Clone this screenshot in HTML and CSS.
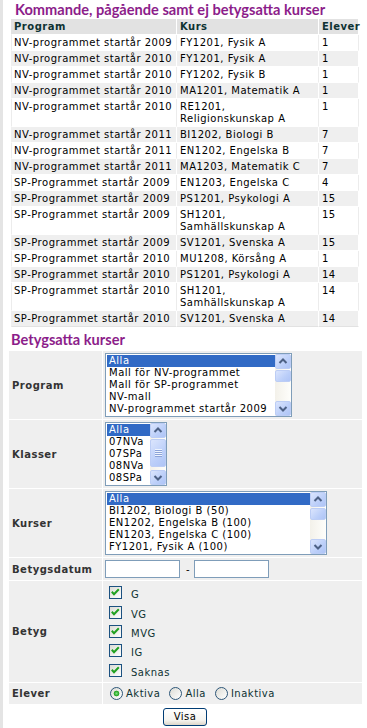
FILE: index.html
```html
<!DOCTYPE html>
<html lang="sv">
<head>
    <meta charset="UTF-8">
    <meta name="viewport" content="width=device-width, initial-scale=1.0">
    <title>Kurser</title>
    <link rel="stylesheet" href="styles.css">
</head>
<body>
<div class="page">
    <!-- Kommande kurser -->
    <h2 class="section-title">Kommande, pågående samt ej betygsatta kurser</h2>
    <table class="course-table">
        <colgroup>
            <col class="col-program">
            <col class="col-kurs">
            <col class="col-elever">
        </colgroup>
        <thead>
            <tr><th>Program</th><th>Kurs</th><th>Elever</th></tr>
        </thead>
        <tbody>
            <tr><td>NV-programmet startår 2009</td><td>FY1201, Fysik A</td><td>1</td></tr>
            <tr><td>NV-programmet startår 2010</td><td>FY1201, Fysik A</td><td>1</td></tr>
            <tr><td>NV-programmet startår 2010</td><td>FY1202, Fysik B</td><td>1</td></tr>
            <tr><td>NV-programmet startår 2010</td><td>MA1201, Matematik A</td><td>1</td></tr>
            <tr><td>NV-programmet startår 2010</td><td>RE1201, Religionskunskap A</td><td>1</td></tr>
            <tr><td>NV-programmet startår 2011</td><td>BI1202, Biologi B</td><td>7</td></tr>
            <tr><td>NV-programmet startår 2011</td><td>EN1202, Engelska B</td><td>7</td></tr>
            <tr><td>NV-programmet startår 2011</td><td>MA1203, Matematik C</td><td>7</td></tr>
            <tr><td>SP-Programmet startår 2009</td><td>EN1203, Engelska C</td><td>4</td></tr>
            <tr><td>SP-Programmet startår 2009</td><td>PS1201, Psykologi A</td><td>15</td></tr>
            <tr><td>SP-Programmet startår 2009</td><td>SH1201, Samhällskunskap A</td><td>15</td></tr>
            <tr><td>SP-Programmet startår 2009</td><td>SV1201, Svenska A</td><td>15</td></tr>
            <tr><td>SP-Programmet startår 2010</td><td>MU1208, Körsång A</td><td>1</td></tr>
            <tr><td>SP-Programmet startår 2010</td><td>PS1201, Psykologi A</td><td>14</td></tr>
            <tr><td>SP-Programmet startår 2010</td><td>SH1201, Samhällskunskap A</td><td>14</td></tr>
            <tr><td>SP-Programmet startår 2010</td><td>SV1201, Svenska A</td><td>14</td></tr>
        </tbody>
    </table>

    <!-- Betygsatta kurser -->
    <h2 class="section-title second">Betygsatta kurser</h2>
    <table class="filter-table">
        <tr>
            <th>Program</th>
            <td>
                <div class="listbox lb-program">
                    <ul>
                        <li class="selected">Alla</li>
                        <li>Mall för NV-programmet</li>
                        <li>Mall för SP-programmet</li>
                        <li>NV-mall</li>
                        <li>NV-programmet startår 2009</li>
                    </ul>
                    <div class="scrollbar">
                        <div class="sb-btn"><svg viewBox="0 0 14 13"><polyline points="3.5,8 7,4.5 10.5,8"/></svg></div>
                        <div class="sb-thumb small"></div>
                        <div class="sb-track"></div>
                        <div class="sb-btn"><svg viewBox="0 0 14 13"><polyline points="3.5,5 7,8.5 10.5,5"/></svg></div>
                    </div>
                </div>
            </td>
        </tr>
        <tr>
            <th>Klasser</th>
            <td>
                <div class="listbox lb-klasser">
                    <ul>
                        <li class="selected">Alla</li>
                        <li>07NVa</li>
                        <li>07SPa</li>
                        <li>08NVa</li>
                        <li>08SPa</li>
                    </ul>
                    <div class="scrollbar">
                        <div class="sb-btn"><svg viewBox="0 0 14 13"><polyline points="3.5,8 7,4.5 10.5,8"/></svg></div>
                        <div class="sb-thumb large"><span class="grip"></span></div>
                        <div class="sb-track"></div>
                        <div class="sb-btn"><svg viewBox="0 0 14 13"><polyline points="3.5,5 7,8.5 10.5,5"/></svg></div>
                    </div>
                </div>
            </td>
        </tr>
        <tr>
            <th>Kurser</th>
            <td>
                <div class="listbox lb-kurser">
                    <ul>
                        <li class="selected">Alla</li>
                        <li>BI1202, Biologi B (50)</li>
                        <li>EN1202, Engelska B (100)</li>
                        <li>EN1203, Engelska C (100)</li>
                        <li>FY1201, Fysik A (100)</li>
                    </ul>
                    <div class="scrollbar">
                        <div class="sb-btn"><svg viewBox="0 0 14 13"><polyline points="3.5,8 7,4.5 10.5,8"/></svg></div>
                        <div class="sb-thumb small"></div>
                        <div class="sb-track"></div>
                        <div class="sb-btn"><svg viewBox="0 0 14 13"><polyline points="3.5,5 7,8.5 10.5,5"/></svg></div>
                    </div>
                </div>
            </td>
        </tr>
        <tr>
            <th>Betygsdatum</th>
            <td>
                <div class="date-range">
                    <input type="text" class="date-input">
                    <span class="dash">-</span>
                    <input type="text" class="date-input">
                </div>
            </td>
        </tr>
        <tr>
            <th>Betyg</th>
            <td>
                <div class="check-list">
                    <label class="check"><span class="box"><svg viewBox="0 0 11 11"><polyline points="1.8,4.8 4,7.2 8.8,2.2"/></svg></span><span class="check-text">G</span></label>
                    <label class="check"><span class="box"><svg viewBox="0 0 11 11"><polyline points="1.8,4.8 4,7.2 8.8,2.2"/></svg></span><span class="check-text">VG</span></label>
                    <label class="check"><span class="box"><svg viewBox="0 0 11 11"><polyline points="1.8,4.8 4,7.2 8.8,2.2"/></svg></span><span class="check-text">MVG</span></label>
                    <label class="check"><span class="box"><svg viewBox="0 0 11 11"><polyline points="1.8,4.8 4,7.2 8.8,2.2"/></svg></span><span class="check-text">IG</span></label>
                    <label class="check"><span class="box"><svg viewBox="0 0 11 11"><polyline points="1.8,4.8 4,7.2 8.8,2.2"/></svg></span><span class="check-text">Saknas</span></label>
                </div>
            </td>
        </tr>
        <tr>
            <th>Elever</th>
            <td>
                <div class="radio-row">
                    <label class="radio checked"><span class="dot"></span>Aktiva</label>
                    <label class="radio"><span class="dot"></span>Alla</label>
                    <label class="radio"><span class="dot"></span>Inaktiva</label>
                </div>
            </td>
        </tr>
    </table>
    <div class="actions">
        <button type="button" class="btn">Visa</button>
    </div>
</div>
</body>
</html>
```

FILE: styles.css
```css
* {
    margin: 0;
    padding: 0;
    box-sizing: border-box;
}

body {
    font-family: "DejaVu Sans", Verdana, sans-serif;
    font-size: 10px;
    letter-spacing: 0.5px;
    color: #000;
    background: #fff;
    border-left: 3px solid #e4e4e4;
    min-height: 100vh;
}

.page {
    padding: 0 8px;
}

.section-title {
    font-family: Lato, "Open Sans", sans-serif;
    font-size: 14.6px;
    font-weight: bold;
    letter-spacing: 0;
    line-height: 16px;
    color: #8c1d8a;
    height: 19px;
    padding: 2px 0 0 4px;
}

.section-title.second {
    margin-top: 3px;
    height: 21px;
    padding-left: 0;
}

/* course table */
.course-table {
    width: 348px;
    table-layout: fixed;
    border-collapse: separate;
    border-spacing: 0;
}

.col-program { width: 166px; }
.col-kurs { width: 142px; }
.col-elever { width: 40px; }

.course-table th,
.course-table td {
    padding: 2px 3px 1px;
    line-height: 12px;
    text-align: left;
    vertical-align: top;
    border-right: 1px solid #ececec;
    border-bottom: 1px solid #fff;
}

.course-table td:first-child {
    white-space: nowrap;
    border-left: 1px solid #ececec;
    padding-left: 2px;
}

.course-table th:first-child {
    border-left: 1px solid #e2e2e2;
    padding-left: 2px;
}

.course-table th {
    background: #e2e2e2;
    color: #0e3232;
    font-weight: bold;
    border-right-color: #fff;
}

.course-table tbody tr:nth-child(even) td {
    background: #efefef;
    border-right-color: #fff;
    border-left-color: #efefef;
}

.course-table tbody tr:last-child td {
    border-bottom-color: #e2e2e2;
}

/* filter form */
.filter-table {
    width: 353px;
    margin: 0 -2px;
    border-collapse: separate;
    border-spacing: 0;
    background: #efefef;
}

.filter-table th {
    width: 94px;
    text-align: left;
    font-weight: bold;
    color: #333;
    padding-left: 3px;
    vertical-align: middle;
    border-right: 1px solid #fff;
    border-bottom: 1px solid #fff;
}

.filter-table td {
    padding: 2px;
    border-bottom: 1px solid #fff;
}

.filter-table tr:last-child th,
.filter-table tr:last-child td {
    border-bottom: none;
}

.listbox {
    display: flex;
    height: 64px;
    border: 1px solid #7f9db9;
    background: #fff;
}

.lb-program { width: 187px; }
.lb-klasser { width: 62px; }
.lb-kurser { width: 222px; }

.listbox ul {
    flex: 1;
    min-width: 0;
    list-style: none;
    padding: 1px 0 0 1px;
    overflow: hidden;
}

.listbox li {
    height: 12px;
    line-height: 12px;
    padding-left: 2px;
    white-space: nowrap;
}

.listbox li.selected {
    background: #316ac5;
    color: #fff;
}

.scrollbar {
    width: 16px;
    flex-shrink: 0;
    display: flex;
    flex-direction: column;
    background: linear-gradient(to right, #f3f1ea, #fefefb);
}

.sb-btn,
.sb-thumb {
    border: 1px solid #bccdf5;
    border-radius: 2px;
    background: linear-gradient(135deg, #dbe5fd, #bccff9 60%, #aec4f6);
}

.sb-btn {
    height: 15px;
    flex-shrink: 0;
}

.sb-btn svg {
    display: block;
    width: 14px;
    height: 13px;
    fill: none;
    stroke: #4d6185;
    stroke-width: 2;
}

.sb-thumb.small { height: 12px; margin-top: 1px; }
.sb-thumb.large {
    height: 28px;
    margin-top: 1px;
    display: flex;
    align-items: center;
    justify-content: center;
}

.grip {
    width: 7px;
    height: 8px;
    background: repeating-linear-gradient(to bottom, #eef4fe 0, #eef4fe 1px, #8ca3d8 1px, #8ca3d8 2px);
}

.sb-track { flex: 1; }

.date-range {
    display: flex;
    align-items: center;
}

.date-input {
    width: 75px;
    height: 18px;
    border: 1px solid #7f9db9;
    background: #fff;
    font-family: inherit;
    font-size: 10px;
}

.dash {
    margin: 0 4px 0 6px;
    color: #000;
}

.check-list {
    display: flex;
    flex-direction: column;
    padding-left: 4px;
}

.check {
    display: flex;
    align-items: center;
    height: 19.4px;
}

.box {
    width: 13px;
    height: 13px;
    border: 1px solid #1c5180;
    background: linear-gradient(135deg, #dcdcd5, #fff);
}

.box svg {
    display: block;
    width: 11px;
    height: 11px;
    fill: none;
    stroke: #21a121;
    stroke-width: 2;
}

.check-text {
    margin: 4px 0 0 9px;
    color: #0e3232;
}

.radio-row {
    display: flex;
    align-items: center;
    height: 17px;
    padding-left: 5px;
    gap: 9px;
    color: #0e3232;
}

.radio {
    display: flex;
    align-items: center;
    gap: 3px;
}

.dot {
    width: 13px;
    height: 13px;
    border: 1px solid #2d5678;
    border-radius: 50%;
    background: linear-gradient(135deg, #dcdcd5, #fff);
}

.radio.checked .dot {
    background: radial-gradient(circle, #7ee27e 0, #21a121 2.5px, transparent 3.2px), linear-gradient(135deg, #dcdcd5, #fff);
}

.actions {
    display: flex;
    justify-content: center;
    padding-top: 4px;
}

.btn {
    width: 44px;
    height: 18px;
    border: 1px solid #003c74;
    border-radius: 3px;
    background: linear-gradient(#fff, #f5f4ef 70%, #dcd6c9);
    font-family: inherit;
    font-size: 10px;
    letter-spacing: 0.5px;
    color: #000;
}
```
